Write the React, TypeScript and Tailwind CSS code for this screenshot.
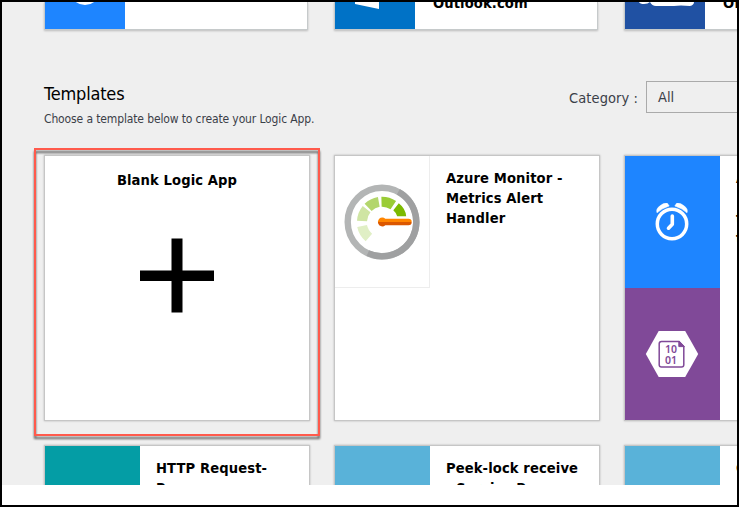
import type { ReactNode } from "react";

const title =
  "font-bold text-black whitespace-pre text-[14.6px] leading-5 tracking-[0.11px]";

function Card({ children, className = "" }: { children?: ReactNode; className?: string }) {
  return (
    <div
      className={`flex h-[266px] w-[266px] shrink-0 overflow-hidden border border-[#c6c6c6] bg-white shadow-[0_0_2px_rgba(0,0,0,0.25)] ${className}`}
    >
      {children}
    </div>
  );
}

function ConnectorCard({ color, icon, children }: { color: string; icon: ReactNode; children?: ReactNode }) {
  return (
    <div className="flex h-7 w-[264px] shrink-0 overflow-hidden border border-t-0 border-[#c6cacb] bg-white shadow-[0_1px_2px_rgba(0,0,0,0.22)]">
      <div className={`h-[27px] w-20 shrink-0 ${color}`}>{icon}</div>
      <div className={`-mt-[9px] ml-[18px] ${title}`}>{children}</div>
    </div>
  );
}

function Gauge() {
  return (
    <svg width="76" height="76" viewBox="0 0 76 76" fill="none">
      <defs>
        <linearGradient id="needle" x1="0" y1="34" x2="0" y2="42" gradientUnits="userSpaceOnUse">
          <stop offset="0.5" stopColor="#ff8500" />
          <stop offset="0.5" stopColor="#db5700" />
        </linearGradient>
      </defs>
      <circle cx="38" cy="38" r="34.3" stroke="#b3b5b5" strokeWidth="6.4" />
      <path d="M54.3 7.8A34.3 34.3 0 0 1 23.8 69.2" stroke="#9fa0a1" strokeWidth="6.4" />
      <g strokeWidth="10">
        <path d="M18.1 42.1A20.3 20.3 0 0 0 24.9 53.5" stroke="#e0efc5" />
        <path d="M18 37A20.3 20.3 0 0 1 22.6 25.1" stroke="#cfe5a3" />
        <path d="M24.1 23.4A20.3 20.3 0 0 1 34.8 17.9" stroke="#b3d66c" />
        <path d="M37.5 17.7A20.3 20.3 0 0 1 49.3 21.1" stroke="#9acc36" />
      </g>
      <path d="M54.8 19.2Q61.5 24.5 62.2 32.2H53.2Q52 28.6 49.3 26.3Z" fill="#7cba00" />
      <path d="M38 33.6a4.4 4.4 0 0 1 3.3 1.2H64.5a3.2 3.2 0 0 1 0 6.4H41.3A4.4 4.4 0 1 1 38 33.6Z" fill="url(#needle)" />
    </svg>
  );
}

function AlarmClock() {
  return (
    <svg className="-ml-px" width="34" height="38" viewBox="0 0 34 38" fill="none" stroke="white">
      <circle cx="17" cy="21" r="14.7" strokeWidth="3.5" />
      <path d="M17.3 13v8.3l-3.8 3.9" strokeWidth="3.6" strokeLinecap="round" strokeLinejoin="round" />
      <path d="M2 9.8Q.4 6 4.6 3Q9-.6 12.4.2L14.2 3Q8 4.8 2 9.8Z" fill="white" strokeWidth="0.5" />
      <path d="M32 9.8Q33.6 6 29.4 3Q25-.6 21.6.2L19.8 3Q26 4.8 32 9.8Z" fill="white" strokeWidth="0.5" />
    </svg>
  );
}

function BinaryBlob() {
  return (
    <div className="-ml-px grid">
      <svg className="col-start-1 row-start-1" width="54" height="46" viewBox="0 0 54 46" fill="none">
        <path d="M.8 23L13.7 0H40.2L53.2 23L40.2 46H13.7Z" fill="white" />
        <path d="M34 10.5H16.5Q14.2 10.5 14.2 12.8V33.7Q14.2 36 16.5 36H36.5Q38.8 36 38.8 33.7V15.5Z" stroke="#804998" strokeWidth="1.5" />
        <path d="M33.8 10v5.6h5.5Z" fill="#804998" stroke="#804998" />
      </svg>
      <div className="col-start-1 row-start-1 whitespace-pre pt-[13px] pr-[2px] text-center font-['Noto_Sans',sans-serif] text-[10.5px] font-semibold leading-[10.5px] text-[#804998]">
        {"10\n01"}
      </div>
    </div>
  );
}

export default function App() {
  return (
    <div className="h-[507px] w-[739px] overflow-hidden border-2 border-black bg-white font-['DejaVu_Sans_Condensed','DejaVu_Sans',sans-serif] [font-stretch:condensed]">
      <main className="relative flex h-[483px] flex-col overflow-hidden bg-[#efefef] pl-[42px]">
        <div className="flex shrink-0 gap-[26px]">
          <ConnectorCard
            color="bg-[#1e85ff]"
            icon={
              <svg width="80" height="27">
                <ellipse cx="40" cy="-7" rx="13" ry="10" fill="white" />
              </svg>
            }
          />
          <ConnectorCard
            color="bg-[#0072c6]"
            icon={
              <svg width="80" height="27">
                <path d="M20 0H44V7L20 2Z" fill="white" />
              </svg>
            }
          >
            Outlook.com
          </ConnectorCard>
          <ConnectorCard
            color="bg-[#2051a3]"
            icon={
              <svg width="80" height="27" fill="white">
                <path d="M14 0H25Q23 2 19 2Q15 2 14 0Z" />
                <path d="M25 0H69Q69 3 65 4Q55 3 49 4H31Q27 4 25 0Z" />
              </svg>
            }
          >
            Office 365
          </ConnectorCard>
        </div>

        <header className="mt-[49px] flex h-[76px] shrink-0 items-start justify-between">
          <div>
            <h1 className="mt-[3px] text-[18px] leading-6 tracking-[-0.18px] text-black">Templates</h1>
            <p className="mt-[5px] text-[12px] leading-4 tracking-[-0.13px] text-[#3b4048]">
              Choose a template below to create your Logic App.
            </p>
          </div>
          <div className="flex items-start text-[14.5px] text-[#3b4048]">
            <span className="mt-[7px] mr-2 whitespace-nowrap leading-6 tracking-[0.08px]">Category :</span>
            <div className="mt-[2px] flex h-8 w-[91px] items-center border border-r-0 border-[#aaa] pt-[2px] pl-[11px]">
              All
            </div>
          </div>
        </header>

        <div className="flex shrink-0 flex-col gap-6">
          <div className="flex gap-6">
            <Card className="flex-col items-center">
              <h2 className={`mt-[14px] ${title}`}>Blank Logic App</h2>
              <svg className="mt-[48px]" width="74" height="75" viewBox="0 0 74 75">
                <path d="M31.5 .5h11v32h31.5v10.5H42.5v31.5h-11V43H0V32.5h31.5Z" fill="black" />
              </svg>
            </Card>
            <Card>
              <div className="flex h-[132px] w-[95px] shrink-0 items-center justify-center border-r border-b border-[#ededed]">
                <Gauge />
              </div>
              <h2 className={`mt-[12px] ml-4 ${title}`}>{"Azure Monitor -\nMetrics Alert\nHandler"}</h2>
            </Card>
            <Card>
              <div className="w-[95px] shrink-0">
                <div className="flex h-[132px] items-center justify-center bg-[#1e85ff]">
                  <AlarmClock />
                </div>
                <div className="flex h-[132px] items-center justify-center bg-[#804998]">
                  <BinaryBlob />
                </div>
              </div>
              <h2 className={`mt-[12px] ml-4 ${title}`}>{"A\n\nt\nt"}</h2>
            </Card>
          </div>
          <div className="flex gap-6">
            <Card>
              <div className="w-[95px] shrink-0 bg-[#049da5]" />
              <h2 className={`mt-[12px] ml-4 ${title}`}>{"HTTP Request-\nResponse"}</h2>
            </Card>
            <Card>
              <div className="w-[95px] shrink-0 bg-[#59b2d9]" />
              <h2 className={`mt-[12px] ml-4 ${title}`}>{"Peek-lock receive\n- Service Bus"}</h2>
            </Card>
            <Card>
              <div className="w-[95px] shrink-0 bg-[#59b2d9]" />
              <h2 className={`mt-[12px] ml-4 ${title}`}>C</h2>
            </Card>
          </div>
        </div>

        <div className="pointer-events-none absolute top-[146px] left-8 h-[288px] w-[286px] border-2 border-[#ff5a4c] drop-shadow-[0_3px_1px_rgba(0,0,0,0.6)]" />
      </main>
    </div>
  );
}
